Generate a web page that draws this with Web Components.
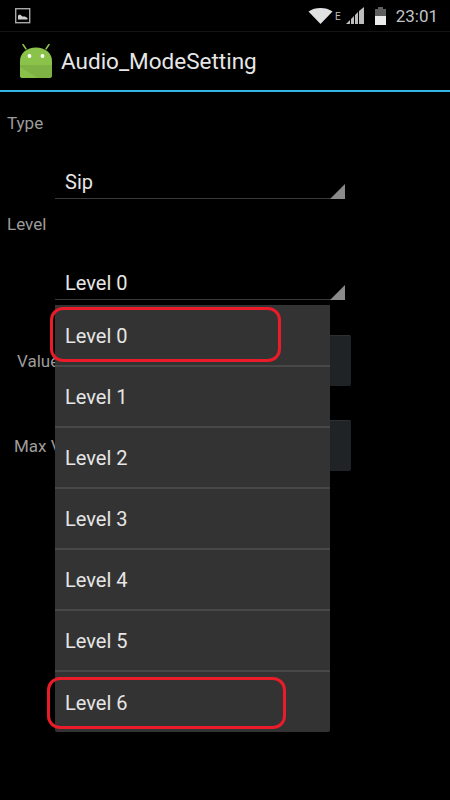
<!DOCTYPE html>
<html>
<head>
<meta charset="utf-8">
<title>Audio_ModeSetting</title>
<style>
    html, body { margin: 0; padding: 0; background: #000; }
    body { width: 450px; height: 800px; overflow: hidden; position: relative; font-family: Roboto, "Liberation Sans", sans-serif; }
</style>
</head>
<body>
<status-bar time="23:01"></status-bar>
<action-bar>Audio_ModeSetting</action-bar>
<main-form>
    <form-label>Type</form-label>
    <spinner-field style="margin-top:25px">Sip</spinner-field>
    <form-label style="margin-top:14px">Level</form-label>
    <spinner-field style="margin-top:25px">Level 0</spinner-field>
    <value-row label="Value" indent="17" style="margin-top:35px"></value-row>
    <value-row label="Max V" indent="14" style="margin-top:34px"></value-row>
</main-form>
<spinner-popup>
    <popup-item>Level 0</popup-item>
    <popup-item>Level 1</popup-item>
    <popup-item>Level 2</popup-item>
    <popup-item>Level 3</popup-item>
    <popup-item>Level 4</popup-item>
    <popup-item>Level 5</popup-item>
    <popup-item>Level 6</popup-item>
</spinner-popup>
<red-ring style="left:50px;top:307px;width:231px;height:55px"></red-ring>
<red-ring style="left:47px;top:677px;width:239px;height:52px"></red-ring>

<script>
// status bar along the top: picture notification on the left, system icons on the right
class StatusBar extends HTMLElement {
    constructor() {
        super();
        this.attachShadow({mode: "open"});
        this.shadowRoot.innerHTML = `
            <style>
                :host {
                    display: flex;
                    align-items: center;
                    box-sizing: border-box;
                    height: 32px;
                    padding: 0 12px 0 15px;
                    border-bottom: 1px solid #141414;
                    color: #bdbdbd;
                }
                .right { margin-left: auto; display: flex; align-items: center; }
                .time { font-size: 17px; margin-left: 9px; color: #c4c4c4; }
                svg { display: block; }
                .e { font-size: 10px; align-self: flex-start; margin: 5px 0 0 2px; }
            </style>
            <svg width="16" height="16" viewBox="0 0 16 16">
                <rect x="0.700" y="0.700" width="14" height="14" fill="none" stroke="#a8a8a8" stroke-width="1.400"/>
                <path d="M3 11V7.500L5 6.500L7.500 8.500L10 8.500L12.500 10V11.500H3Z" fill="#d0d0d0"/>
            </svg>
            <div class="right">
                <svg width="25" height="18" viewBox="0 0 25 18"><path d="M12.500 1C8 1 4 2 0.500 4.500L12.500 17L24.500 4.500C21 2 17 1 12.500 1Z" fill="#e2e2e2"/></svg>
                <span class="e">E</span>
                <svg width="19" height="18" viewBox="0 0 19 18" style="margin-left:5px"><path d="M0 17L4 13V17ZM5 17V12L8 9V17ZM9 17V8L12 5V17ZM13 17V4L18 0V17Z" fill="#bdbdbd"/></svg>
                <svg width="13" height="18" viewBox="0 0 13 18" style="margin-left:9px"><path d="M4 0H9V2H12V18H1V2H4Z" fill="#5e5e5e"/><rect x="1" y="9" width="11" height="9" fill="#ececec"/></svg>
                <span class="time"></span>
            </div>
        `;
    }

    connectedCallback() {
        this.shadowRoot.querySelector('.time').textContent = this.getAttribute('time');
    }
}

class ActionBar extends HTMLElement {
    constructor() {
        super();
        this.attachShadow({mode: "open"});
        this.shadowRoot.innerHTML = `
            <style>
                :host {
                    display: flex;
                    align-items: center;
                    box-sizing: border-box;
                    height: 60px;
                    padding-left: 19px;
                    border-bottom: 2px solid #33b5e5;
                    color: #e6e6e6;
                    font-size: 22.500px;
                }
                svg { display: block; margin-right: 8px; }
            </style>
            <svg width="34" height="35" viewBox="0 0 34 35">
                <path d="M7 5L4 0.500M27 5L30 0.500" stroke="#8bc34a" stroke-width="1.500" stroke-linecap="round"/>
                <path d="M1 17C1 9 8 3.500 17 3.500S33 9 33 17V31C33 33 32 34 30 34H4C2 34 1 33 1 31Z" fill="#8bc34a"/>
                <path d="M1 21H33V31C33 33 32 34 30 34H4C2 34 1 33 1 31Z" fill="#7fb245"/>
                <path d="M1 23L19 34H4C2 34 1 33 1 31Z" fill="#88c049"/>
                <circle cx="10.500" cy="12" r="1.900" fill="#fff"/>
                <circle cx="23.500" cy="12" r="1.900" fill="#fff"/>
            </svg>
            <slot></slot>
        `;
    }
}

class MainForm extends HTMLElement {
    constructor() {
        super();
        this.attachShadow({mode: "open"});
        this.shadowRoot.innerHTML = `
            <style>
                :host { display: flex; flex-direction: column; padding-top: 20px; }
            </style>
            <slot></slot>
        `;
    }
}

class FormLabel extends HTMLElement {
    constructor() {
        super();
        this.attachShadow({mode: "open"});
        this.shadowRoot.innerHTML = `
            <style>
                :host {
                    display: block;
                    padding-left: 7px;
                    height: 22px;
                    line-height: 22px;
                    font-size: 17px;
                    color: #9c9c9c;
                }
            </style>
            <slot></slot>
        `;
    }
}

// closed spinner: text over a thin underline with the corner triangle
class SpinnerField extends HTMLElement {
    constructor() {
        super();
        this.attachShadow({mode: "open"});
        this.shadowRoot.innerHTML = `
            <style>
                :host {
                    display: block;
                    position: relative;
                    box-sizing: border-box;
                    width: 290px;
                    height: 40px;
                    margin-left: 55px;
                    padding-left: 10px;
                    line-height: 46px;
                    font-size: 20px;
                    color: #e6e6e6;
                    border-bottom: 1px solid #3a3a3a;
                }
                svg { position: absolute; right: 0; bottom: -1px; display: block; }
            </style>
            <slot></slot>
            <svg width="15" height="15" viewBox="0 0 15 15"><path d="M15 0V15H0Z" fill="#8a8a8a"/></svg>
        `;
    }
}

class ValueRow extends HTMLElement {
    constructor() {
        super();
        this.attachShadow({mode: "open"});
        this.shadowRoot.innerHTML = `
            <style>
                :host {
                    display: flex;
                    align-items: center;
                    height: 51px;
                    font-size: 17px;
                    color: #9c9c9c;
                }
                .btn {
                    margin-left: auto;
                    margin-right: 99px;
                    width: 60px;
                    height: 51px;
                    box-sizing: border-box;
                    background: #1f2326;
                    border-top: 1px solid #2c3033;
                    border-radius: 2px;
                }
            </style>
            <span class="label"></span>
            <div class="btn"></div>
        `;
    }

    connectedCallback() {
        const label = this.shadowRoot.querySelector('.label');
        label.textContent = this.getAttribute('label');
        label.style.paddingLeft = this.getAttribute('indent') + 'px';
    }
}

// open dropdown list, sits over the form
class SpinnerPopup extends HTMLElement {
    constructor() {
        super();
        this.attachShadow({mode: "open"});
        this.shadowRoot.innerHTML = `
            <style>
                :host {
                    position: absolute;
                    left: 55px;
                    top: 305px;
                    width: 275px;
                    padding-top: 1px;
                    display: flex;
                    flex-direction: column;
                    background: #333;
                    border-radius: 0 0 2px 2px;
                }
            </style>
            <slot></slot>
        `;
    }
}

class PopupItem extends HTMLElement {
    constructor() {
        super();
        this.attachShadow({mode: "open"});
        this.shadowRoot.innerHTML = `
            <style>
                :host {
                    display: flex;
                    align-items: center;
                    box-sizing: border-box;
                    height: 61px;
                    padding-left: 10px;
                    font-size: 20px;
                    color: #e6e6e6;
                    border-bottom: 2px solid #484848;
                }
                :host(:last-child) { border-bottom: 0; height: 60px; padding-top: 2px; }
            </style>
            <slot></slot>
        `;
    }
}

// red marker somebody drew on top of the screenshot
class RedRing extends HTMLElement {
    constructor() {
        super();
        this.attachShadow({mode: "open"});
        this.shadowRoot.innerHTML = `
            <style>
                :host {
                    position: absolute;
                    box-sizing: border-box;
                    border: 3px solid #ea1c2a;
                    border-radius: 13px;
                }
            </style>
        `;
    }
}

customElements.define('status-bar', StatusBar);
customElements.define('action-bar', ActionBar);
customElements.define('main-form', MainForm);
customElements.define('form-label', FormLabel);
customElements.define('spinner-field', SpinnerField);
customElements.define('value-row', ValueRow);
customElements.define('spinner-popup', SpinnerPopup);
customElements.define('popup-item', PopupItem);
customElements.define('red-ring', RedRing);
</script>
</body>
</html>
